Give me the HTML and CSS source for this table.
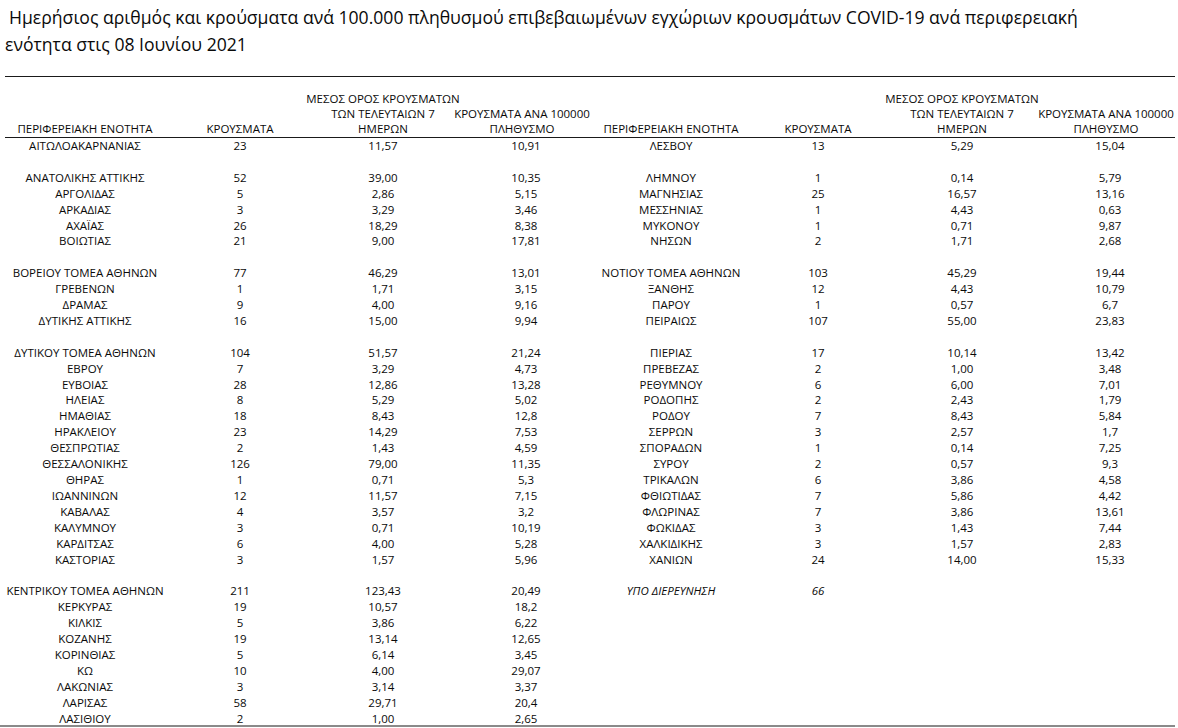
FILE: index.html
```html
<!DOCTYPE html>
<html lang="el">
<head>
<meta charset="utf-8">
<title>Κρούσματα COVID-19 ανά περιφερειακή ενότητα</title>
<link rel="stylesheet" href="styles.css">
</head>
<body>
<h1 class="title"><span class="l1">Ημερήσιος αριθμός και κρούσματα ανά 100.000 πληθυσμού επιβεβαιωμένων εγχώριων κρουσμάτων COVID-19 ανά περιφερειακή</span><br>ενότητα στις 08 Ιουνίου 2021</h1>
<table class="sheet">
<colgroup>
<col class="c1"><col class="c2"><col class="c3"><col class="c4"><col class="c5"><col class="c6"><col class="c7"><col class="c8">
</colgroup>
<thead>
<tr>
<th>ΠΕΡΙΦΕΡΕΙΑΚΗ ΕΝΟΤΗΤΑ</th>
<th>ΚΡΟΥΣΜΑΤΑ</th>
<th><div class="wide">ΜΕΣΟΣ ΟΡΟΣ ΚΡΟΥΣΜΑΤΩΝ<br>ΤΩΝ ΤΕΛΕΥΤΑΙΩΝ 7<br>ΗΜΕΡΩΝ</div></th>
<th><div class="wide">ΚΡΟΥΣΜΑΤΑ ΑΝΑ 100000<br>ΠΛΗΘΥΣΜΟ</div></th>
<th>ΠΕΡΙΦΕΡΕΙΑΚΗ ΕΝΟΤΗΤΑ</th>
<th>ΚΡΟΥΣΜΑΤΑ</th>
<th><div class="wide">ΜΕΣΟΣ ΟΡΟΣ ΚΡΟΥΣΜΑΤΩΝ<br>ΤΩΝ ΤΕΛΕΥΤΑΙΩΝ 7<br>ΗΜΕΡΩΝ</div></th>
<th><div class="wide">ΚΡΟΥΣΜΑΤΑ ΑΝΑ 100000<br>ΠΛΗΘΥΣΜΟ</div></th>
</tr>
</thead>
<tbody>
<tr><td>ΑΙΤΩΛΟΑΚΑΡΝΑΝΙΑΣ</td><td>23</td><td>11,57</td><td class="r">10,91</td><td>ΛΕΣΒΟΥ</td><td>13</td><td>5,29</td><td class="r">15,04</td></tr>
<tr><td></td><td></td><td></td><td></td><td></td><td></td><td></td><td></td></tr>
<tr><td>ΑΝΑΤΟΛΙΚΗΣ ΑΤΤΙΚΗΣ</td><td>52</td><td>39,00</td><td class="r">10,35</td><td>ΛΗΜΝΟΥ</td><td>1</td><td>0,14</td><td class="r">5,79</td></tr>
<tr><td>ΑΡΓΟΛΙΔΑΣ</td><td>5</td><td>2,86</td><td class="r">5,15</td><td>ΜΑΓΝΗΣΙΑΣ</td><td>25</td><td>16,57</td><td class="r">13,16</td></tr>
<tr><td>ΑΡΚΑΔΙΑΣ</td><td>3</td><td>3,29</td><td class="r">3,46</td><td>ΜΕΣΣΗΝΙΑΣ</td><td>1</td><td>4,43</td><td class="r">0,63</td></tr>
<tr><td>ΑΧΑΪΑΣ</td><td>26</td><td>18,29</td><td class="r">8,38</td><td>ΜΥΚΟΝΟΥ</td><td>1</td><td>0,71</td><td class="r">9,87</td></tr>
<tr><td>ΒΟΙΩΤΙΑΣ</td><td>21</td><td>9,00</td><td class="r">17,81</td><td>ΝΗΣΩΝ</td><td>2</td><td>1,71</td><td class="r">2,68</td></tr>
<tr><td></td><td></td><td></td><td></td><td></td><td></td><td></td><td></td></tr>
<tr><td>ΒΟΡΕΙΟΥ ΤΟΜΕΑ ΑΘΗΝΩΝ</td><td>77</td><td>46,29</td><td class="r">13,01</td><td>ΝΟΤΙΟΥ ΤΟΜΕΑ ΑΘΗΝΩΝ</td><td>103</td><td>45,29</td><td class="r">19,44</td></tr>
<tr><td>ΓΡΕΒΕΝΩΝ</td><td>1</td><td>1,71</td><td class="r">3,15</td><td>ΞΑΝΘΗΣ</td><td>12</td><td>4,43</td><td class="r">10,79</td></tr>
<tr><td>ΔΡΑΜΑΣ</td><td>9</td><td>4,00</td><td class="r">9,16</td><td>ΠΑΡΟΥ</td><td>1</td><td>0,57</td><td class="r">6,7</td></tr>
<tr><td>ΔΥΤΙΚΗΣ ΑΤΤΙΚΗΣ</td><td>16</td><td>15,00</td><td class="r">9,94</td><td>ΠΕΙΡΑΙΩΣ</td><td>107</td><td>55,00</td><td class="r">23,83</td></tr>
<tr><td></td><td></td><td></td><td></td><td></td><td></td><td></td><td></td></tr>
<tr><td>ΔΥΤΙΚΟΥ ΤΟΜΕΑ ΑΘΗΝΩΝ</td><td>104</td><td>51,57</td><td class="r">21,24</td><td>ΠΙΕΡΙΑΣ</td><td>17</td><td>10,14</td><td class="r">13,42</td></tr>
<tr><td>ΕΒΡΟΥ</td><td>7</td><td>3,29</td><td class="r">4,73</td><td>ΠΡΕΒΕΖΑΣ</td><td>2</td><td>1,00</td><td class="r">3,48</td></tr>
<tr><td>ΕΥΒΟΙΑΣ</td><td>28</td><td>12,86</td><td class="r">13,28</td><td>ΡΕΘΥΜΝΟΥ</td><td>6</td><td>6,00</td><td class="r">7,01</td></tr>
<tr><td>ΗΛΕΙΑΣ</td><td>8</td><td>5,29</td><td class="r">5,02</td><td>ΡΟΔΟΠΗΣ</td><td>2</td><td>2,43</td><td class="r">1,79</td></tr>
<tr><td>ΗΜΑΘΙΑΣ</td><td>18</td><td>8,43</td><td class="r">12,8</td><td>ΡΟΔΟΥ</td><td>7</td><td>8,43</td><td class="r">5,84</td></tr>
<tr><td>ΗΡΑΚΛΕΙΟΥ</td><td>23</td><td>14,29</td><td class="r">7,53</td><td>ΣΕΡΡΩΝ</td><td>3</td><td>2,57</td><td class="r">1,7</td></tr>
<tr><td>ΘΕΣΠΡΩΤΙΑΣ</td><td>2</td><td>1,43</td><td class="r">4,59</td><td>ΣΠΟΡΑΔΩΝ</td><td>1</td><td>0,14</td><td class="r">7,25</td></tr>
<tr><td>ΘΕΣΣΑΛΟΝΙΚΗΣ</td><td>126</td><td>79,00</td><td class="r">11,35</td><td>ΣΥΡΟΥ</td><td>2</td><td>0,57</td><td class="r">9,3</td></tr>
<tr><td>ΘΗΡΑΣ</td><td>1</td><td>0,71</td><td class="r">5,3</td><td>ΤΡΙΚΑΛΩΝ</td><td>6</td><td>3,86</td><td class="r">4,58</td></tr>
<tr><td>ΙΩΑΝΝΙΝΩΝ</td><td>12</td><td>11,57</td><td class="r">7,15</td><td>ΦΘΙΩΤΙΔΑΣ</td><td>7</td><td>5,86</td><td class="r">4,42</td></tr>
<tr><td>ΚΑΒΑΛΑΣ</td><td>4</td><td>3,57</td><td class="r">3,2</td><td>ΦΛΩΡΙΝΑΣ</td><td>7</td><td>3,86</td><td class="r">13,61</td></tr>
<tr><td>ΚΑΛΥΜΝΟΥ</td><td>3</td><td>0,71</td><td class="r">10,19</td><td>ΦΩΚΙΔΑΣ</td><td>3</td><td>1,43</td><td class="r">7,44</td></tr>
<tr><td>ΚΑΡΔΙΤΣΑΣ</td><td>6</td><td>4,00</td><td class="r">5,28</td><td>ΧΑΛΚΙΔΙΚΗΣ</td><td>3</td><td>1,57</td><td class="r">2,83</td></tr>
<tr><td>ΚΑΣΤΟΡΙΑΣ</td><td>3</td><td>1,57</td><td class="r">5,96</td><td>ΧΑΝΙΩΝ</td><td>24</td><td>14,00</td><td class="r">15,33</td></tr>
<tr><td></td><td></td><td></td><td></td><td></td><td></td><td></td><td></td></tr>
<tr><td>ΚΕΝΤΡΙΚΟΥ ΤΟΜΕΑ ΑΘΗΝΩΝ</td><td>211</td><td>123,43</td><td class="r">20,49</td><td class="it">ΥΠΟ ΔΙΕΡΕΥΝΗΣΗ</td><td class="it">66</td><td></td><td></td></tr>
<tr><td>ΚΕΡΚΥΡΑΣ</td><td>19</td><td>10,57</td><td class="r">18,2</td><td></td><td></td><td></td><td></td></tr>
<tr><td>ΚΙΛΚΙΣ</td><td>5</td><td>3,86</td><td class="r">6,22</td><td></td><td></td><td></td><td></td></tr>
<tr><td>ΚΟΖΑΝΗΣ</td><td>19</td><td>13,14</td><td class="r">12,65</td><td></td><td></td><td></td><td></td></tr>
<tr><td>ΚΟΡΙΝΘΙΑΣ</td><td>5</td><td>6,14</td><td class="r">3,45</td><td></td><td></td><td></td><td></td></tr>
<tr><td>ΚΩ</td><td>10</td><td>4,00</td><td class="r">29,07</td><td></td><td></td><td></td><td></td></tr>
<tr><td>ΛΑΚΩΝΙΑΣ</td><td>3</td><td>3,14</td><td class="r">3,37</td><td></td><td></td><td></td><td></td></tr>
<tr><td>ΛΑΡΙΣΑΣ</td><td>58</td><td>29,71</td><td class="r">20,4</td><td></td><td></td><td></td><td></td></tr>
<tr><td>ΛΑΣΙΘΙΟΥ</td><td>2</td><td>1,00</td><td class="r">2,65</td><td></td><td></td><td></td><td></td></tr>
</tbody>
</table>
<div class="edge"></div>
</body>
</html>
```

FILE: styles.css
```css
html, body {
  margin: 0;
  padding: 0;
  background: #ffffff;
  overflow: hidden;
}

body {
  color: #0a0a0a;
  font-family: "Open Sans", "Noto Sans", sans-serif;
}

.title {
  margin: 0;
  padding: 4px 0 0 5px;
  font-size: 17.6px;
  line-height: 27px;
  font-weight: 400;
  color: #0a0a0a;
}

.title .l1 {
  padding-left: 4px;
}

.sheet {
  margin: 18px 0 0 5px;
  width: 1170px;
  border-collapse: collapse;
  table-layout: fixed;
  font-size: 11.5px;
}

.c1 { width: 160px; }
.c2 { width: 150px; }
.c3 { width: 136px; }
.c4 { width: 142px; }
.c5 { width: 156px; }
.c6 { width: 138px; }
.c7 { width: 150px; }
.c8 { width: 138px; }

.sheet th {
  font-weight: 400;
  vertical-align: bottom;
  height: 59px;
  line-height: 15px;
  padding: 0 0 1px;
  border-top: 1.5px solid #1a1a1a;
  border-bottom: 1.5px solid #1a1a1a;
  text-align: center;
  white-space: nowrap;
}

.wide {
  margin: 0 -16px;
}

.sheet td {
  height: 15.9px;
  line-height: 15.9px;
  padding: 0;
  text-align: center;
  white-space: nowrap;
}

.sheet td.r {
  padding-left: 8px;
}

.sheet td.it {
  font-style: italic;
}

.edge {
  position: fixed;
  left: 0;
  bottom: 1px;
  width: 1175px;
  border-top: 2px solid #8a8a8a;
}
```
